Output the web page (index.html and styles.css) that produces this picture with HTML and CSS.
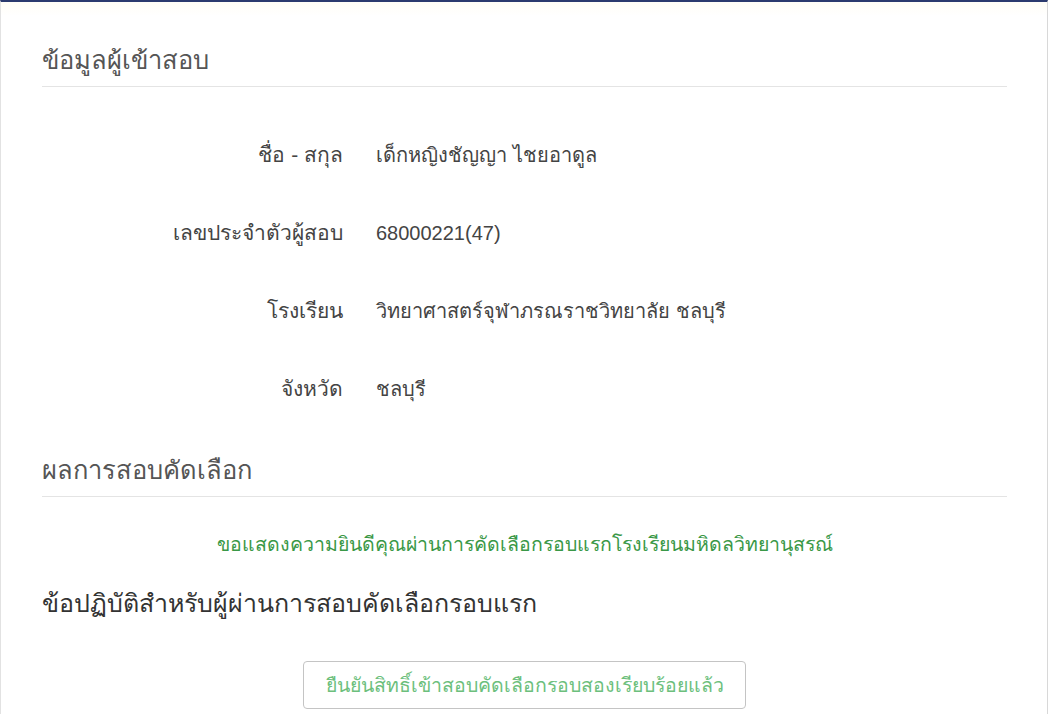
FILE: index.html
```html
<!doctype html>
<html>
<head>
    <meta charset="utf-8">
    <title>ผลการสอบคัดเลือก</title>
    <link rel="stylesheet" href="styles.css">
</head>
<body>
    <div class="panel">
        <h3 class="section-title">ข้อมูลผู้เข้าสอบ</h3>
        <div class="info">
            <div class="info-label">ชื่อ - สกุล</div>
            <div class="info-value">เด็กหญิงชัญญา ไชยอาดูล</div>
            <div class="info-label">เลขประจำตัวผู้สอบ</div>
            <div class="info-value">68000221(47)</div>
            <div class="info-label">โรงเรียน</div>
            <div class="info-value">วิทยาศาสตร์จุฬาภรณราชวิทยาลัย ชลบุรี</div>
            <div class="info-label">จังหวัด</div>
            <div class="info-value">ชลบุรี</div>
        </div>

        <h3 class="section-title result-title">ผลการสอบคัดเลือก</h3>
        <p class="result-text">ขอแสดงความยินดีคุณผ่านการคัดเลือกรอบแรกโรงเรียนมหิดลวิทยานุสรณ์</p>

        <h3 class="rules-title">ข้อปฏิบัติสำหรับผู้ผ่านการสอบคัดเลือกรอบแรก</h3>
        <div class="actions">
            <button class="btn-confirm" disabled>ยืนยันสิทธิ์เข้าสอบคัดเลือกรอบสองเรียบร้อยแล้ว</button>
        </div>
    </div>
</body>
</html>
```

FILE: styles.css
```css
body {
    margin: 0;
    background-color: #fff;
    font-family: 'Liberation Sans', 'Noto Sans', sans-serif;
    color: #333;
}
.panel {
    width: 1048px;
    min-height: 714px;
    box-sizing: border-box;
    padding: 45px 40px 0 41px;
    border-top: 2px solid #2b3a6e;
    border-left: 1px solid #e2e2e2;
    border-right: 1px solid #d8d8d8;
    background: linear-gradient(#fffdf6, #fff 14px);
}
.section-title {
    margin: 0;
    padding-bottom: 13px;
    border-bottom: 1px solid #e4e4e4;
    font-size: 25.5px;
    line-height: 26px;
    font-weight: normal;
    color: #555;
}
.info {
    display: grid;
    grid-template-columns: 301px 1fr;
    column-gap: 33px;
    row-gap: 52px;
    margin-top: 55px;
    line-height: 26px;
}
.info-label {
    text-align: right;
    font-size: 21px;
    color: #444;
}
.info-value {
    font-size: 20px;
    color: #444;
}
.result-title {
    margin-top: 55px;
}
.result-text {
    margin: 36px 0 0;
    text-align: center;
    font-size: 19.5px;
    line-height: 22px;
    color: #3a9847;
}
.rules-title {
    margin: 35px 0 0;
    font-size: 25px;
    line-height: 26px;
    font-weight: normal;
    color: #333;
}
.actions {
    margin-top: 45px;
    text-align: center;
}
.btn-confirm {
    padding: 0;
    height: 48px;
    width: 443px;
    white-space: nowrap;
    font-family: inherit;
    font-size: 19.5px;
    color: #6dbf7d;
    background-color: #fff;
    border: 1px solid #c4c4c4;
    border-radius: 4px;
}
```
